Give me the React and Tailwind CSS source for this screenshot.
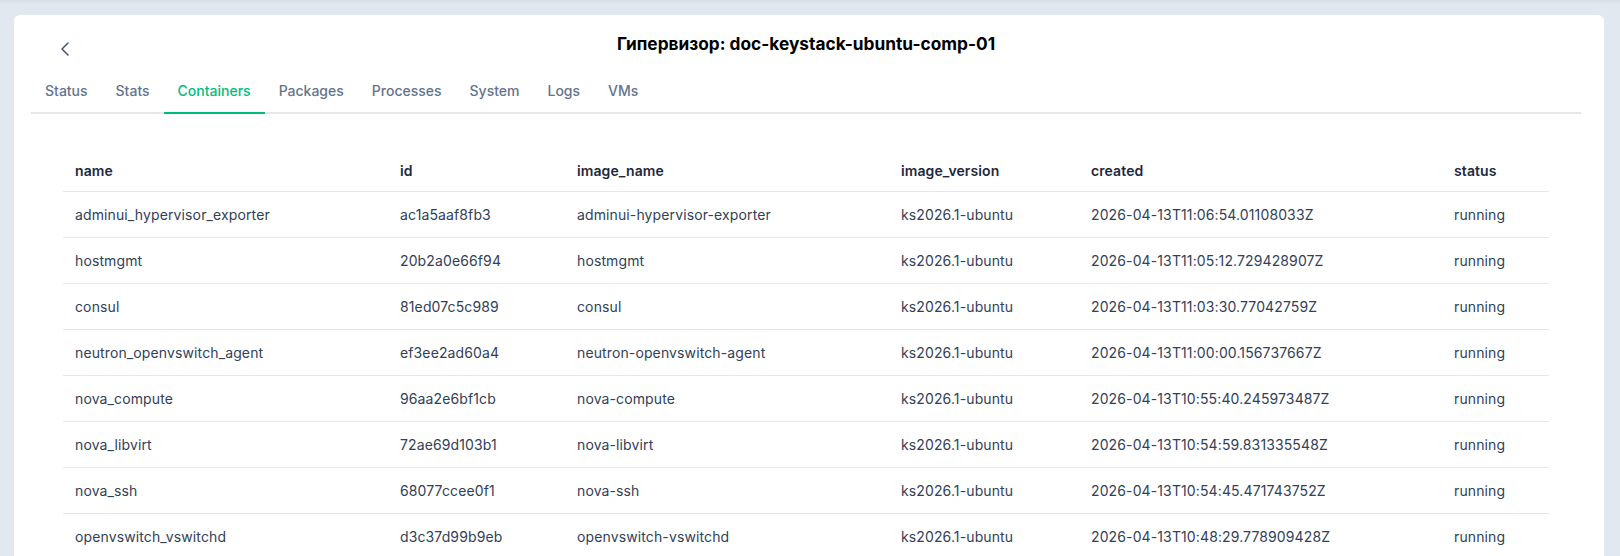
import { ChevronLeft } from 'lucide-react';
import clsx from 'clsx';

const tabs = ['Status', 'Stats', 'Containers', 'Packages', 'Processes', 'System', 'Logs', 'VMs'];

// column keys with their fixed widths
const columns = [
    { key: 'name', width: 'w-[325px]' },
    { key: 'id', width: 'w-[177px]' },
    { key: 'image_name', width: 'w-[324px]' },
    { key: 'image_version', width: 'w-[190px]' },
    { key: 'created', width: 'w-[363px]' },
    { key: 'status', width: '' },
];

const containers = [
    ['adminui_hypervisor_exporter', 'ac1a5aaf8fb3', 'adminui-hypervisor-exporter', '2026-04-13T11:06:54.01108033Z'],
    ['hostmgmt', '20b2a0e66f94', 'hostmgmt', '2026-04-13T11:05:12.729428907Z'],
    ['consul', '81ed07c5c989', 'consul', '2026-04-13T11:03:30.77042759Z'],
    ['neutron_openvswitch_agent', 'ef3ee2ad60a4', 'neutron-openvswitch-agent', '2026-04-13T11:00:00.156737667Z'],
    ['nova_compute', '96aa2e6bf1cb', 'nova-compute', '2026-04-13T10:55:40.245973487Z'],
    ['nova_libvirt', '72ae69d103b1', 'nova-libvirt', '2026-04-13T10:54:59.831335548Z'],
    ['nova_ssh', '68077ccee0f1', 'nova-ssh', '2026-04-13T10:54:45.471743752Z'],
    ['openvswitch_vswitchd', 'd3c37d99b9eb', 'openvswitch-vswitchd', '2026-04-13T10:48:29.778909428Z'],
].map(([name, id, image_name, created]) => ({
    name,
    id,
    image_name,
    image_version: 'ks2026.1-ubuntu',
    created,
    status: 'running',
}));

export default function App() {
    const activeTab = 'Containers';

    return (
        <div className="min-h-screen bg-slate-200 pt-[15px] pl-[14px] pr-4 font-[Inter,'Noto_Sans',sans-serif] shadow-[inset_0_4px_4px_-3px_rgba(15,23,42,0.08)]">
            <div className="rounded-md bg-white pl-[17px] pr-[23px] pt-[15px] pb-8">
                {/* Header: back button + hypervisor name */}
                <header className="grid grid-cols-[1fr_auto_1fr]">
                    <button className="ml-[22px] mt-[7px] h-6 w-6 justify-self-start text-slate-600">
                        <ChevronLeft size={24} strokeWidth={1.5} />
                    </button>
                    <h1 className="text-[17.3px] font-bold leading-7 text-black">
                        Гипервизор: doc-keystack-ubuntu-comp-01
                    </h1>
                    <div />
                </header>

                {/* Tabs */}
                <nav className="mt-[7px] flex border-b-2 border-gray-200">
                    {tabs.map((tab) => (
                        <button
                            key={tab}
                            className={clsx(
                                '-mb-[2px] border-b-2 px-3.5 pt-[13px] pb-[11px] text-sm leading-5 font-medium',
                                tab === activeTab
                                    ? 'border-emerald-500 text-emerald-500'
                                    : 'border-transparent text-slate-500'
                            )}
                        >
                            {tab}
                        </button>
                    ))}
                </nav>

                {/* Containers table */}
                <div className="mt-8 px-8">
                    <table className="w-full table-fixed border-collapse text-sm leading-[21px]">
                        <thead>
                            <tr className="border-b border-gray-200">
                                {columns.map((col) => (
                                    <th
                                        key={col.key}
                                        className={clsx('px-3 pt-[14px] pb-[10px] text-left font-semibold tracking-[0.1px] text-slate-800', col.width)}
                                    >
                                        {col.key}
                                    </th>
                                ))}
                            </tr>
                        </thead>
                        <tbody>
                            {containers.map((row) => (
                                <tr key={row.id} className="border-b border-gray-200">
                                    {columns.map((col) => (
                                        <td key={col.key} className="px-3 py-3 tracking-[0.12px] text-slate-700">
                                            {row[col.key]}
                                        </td>
                                    ))}
                                </tr>
                            ))}
                        </tbody>
                    </table>
                </div>
            </div>
        </div>
    );
}
